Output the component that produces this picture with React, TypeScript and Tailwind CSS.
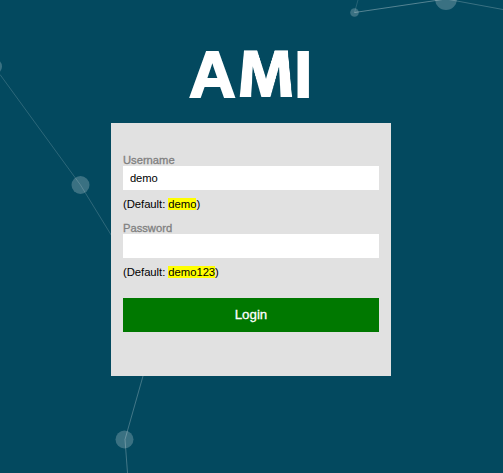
import React from "react";

function Network() {
  return (
    <svg className="absolute inset-0" width="503" height="473" viewBox="0 0 503 473" fill="none">
      <g stroke="#ffffff" strokeWidth="1">
        <path d="M0 74.5 80.5 185 140 282" strokeOpacity=".17" />
        <path d="M143 376 125 439.5 127.5 473" strokeOpacity=".25" />
        <path d="M354.5 12.5 446 -1" strokeOpacity=".32" />
        <path d="M446 -1 503 9.5" strokeOpacity=".22" />
        <path d="M354.5 12.5 358 0" strokeOpacity=".14" />
      </g>
      <g fill="#ffffff" fillOpacity=".22">
        <circle cx="-6" cy="66.5" r="8" />
        <circle cx="80.5" cy="185" r="9" />
        <circle cx="124.5" cy="439.5" r="9" />
        <circle cx="354.5" cy="12.5" r="4.3" />
        <circle cx="446" cy="-1" r="11" />
      </g>
    </svg>
  );
}

function Field({ label, value, hint, type }: { label: string; value: string; hint: string; type: string }) {
  return (
    <div className="h-[68px]">
      <label className="block h-3 text-[11.2px] leading-3 text-[#808080] [-webkit-text-stroke:0.3px_#808080]">{label}</label>
      <input type={type} defaultValue={value} className="block h-6 w-full bg-white pr-[6px] pl-[7px] text-[11.2px] tracking-[-0.1px] text-black outline-none" />
      <p className="pt-2 text-[11.3px] leading-3 tracking-[-0.05px] text-black">
        (Default: <mark className="bg-[#ffff00] text-black">{hint}</mark>)
      </p>
    </div>
  );
}

export default function App() {
  return (
    <main className="relative h-[473px] w-[503px] overflow-hidden bg-[#03495f] font-['Liberation_Sans',Arial,sans-serif]">
      <Network />
      <div className="relative">
        <h1 className="flex h-[123px] pt-[41px] pl-[189px] text-[64.7px] leading-[68px] font-bold text-white">
          <span className="[-webkit-text-stroke:2px_white]">A</span>
          {/* The M is flared so its outer stems spread toward the baseline. */}
          <span className="ml-[3px] block h-[68px] w-[53.9px]">
            <span className="-mt-[58px] -ml-[26.95px] block h-[136px] w-[107.8px] origin-[50%_112.8px] text-[129.4px] leading-[136px] will-change-transform [-webkit-text-stroke:4px_white] [transform:matrix3d(0.55,0,0,0,0,0.59,0,-0.00206,0,0,1,0,0,0,0,1)]">M</span>
          </span>
          <span className="ml-[1.7px] [-webkit-text-stroke:2px_white]">I</span>
        </h1>
        <form className="ml-[111px] h-[253px] w-[280px] bg-[#e1e1e1] px-3 pt-[31px]">
          <Field label="Username" value="demo" hint="demo" type="text" />
          <Field label="Password" value="" hint="demo123" type="password" />
          <button type="button" className="mt-2 block h-[34px] w-full bg-[#007800] pb-px text-[13.3px] text-white [-webkit-text-stroke:0.3px_white]">Login</button>
        </form>
      </div>
    </main>
  );
}
